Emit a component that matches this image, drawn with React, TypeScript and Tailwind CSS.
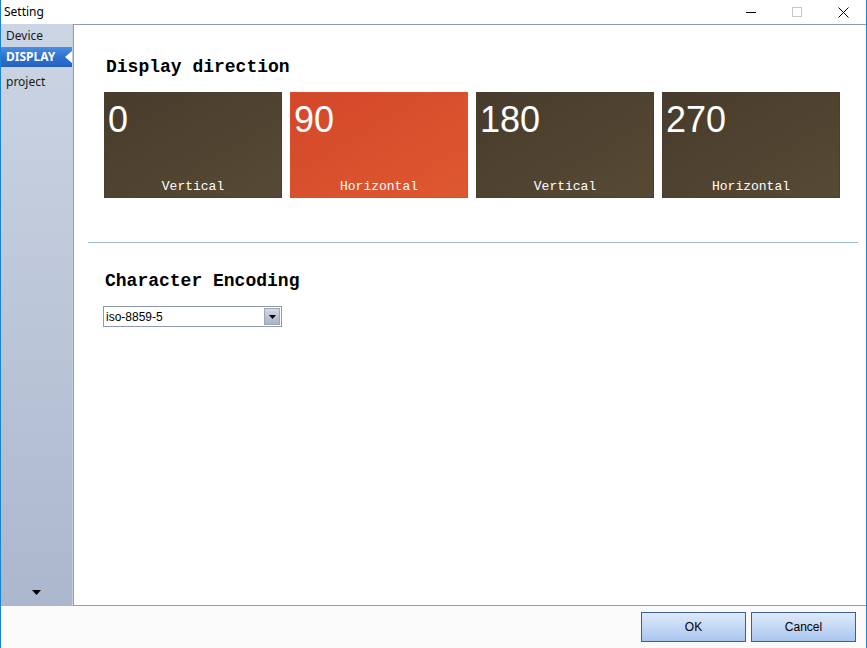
import React from 'react';

const tiles = [
  { deg: '0', label: 'Vertical', active: false },
  { deg: '90', label: 'Horizontal', active: true },
  { deg: '180', label: 'Vertical', active: false },
  { deg: '270', label: 'Horizontal', active: false },
];

const sans = "font-['Segoe_UI','Noto_Sans','Liberation_Sans',sans-serif]";
const mono = "font-['Liberation_Mono','DejaVu_Sans_Mono',monospace]";

export default function App() {
  return (
    <div className={`w-[867px] h-[648px] flex flex-col bg-white border-l border-r border-[#1883d7] ${sans} text-black overflow-hidden`}>
      {/* Title bar */}
      <div className="h-[24px] flex items-center justify-between shrink-0">
        <span className="pl-[3px] text-[12px] leading-none">Setting</span>
        <div className="flex items-center h-full">
          <div className="w-[46px] h-full flex items-center justify-center">
            <div className="w-[10px] h-px bg-black" />
          </div>
          <div className="w-[46px] h-full flex items-center justify-center">
            <div className="w-[10px] h-[10px] border border-[#c8c8c8]" />
          </div>
          <div className="w-[46px] h-full flex items-center justify-center">
            <svg width="11" height="11" viewBox="0 0 11 11">
              <path d="M0.5 0.5 L10.5 10.5 M10.5 0.5 L0.5 10.5" stroke="#000" strokeWidth="1" />
            </svg>
          </div>
        </div>
      </div>

      {/* Body */}
      <div className="flex h-[582px] shrink-0">
        {/* Sidebar */}
        <div className="w-[72px] flex flex-col bg-gradient-to-b from-[#cbd5e4] to-[#abb7cd] border-r border-[#c6cfdc] relative">
          <div className="h-[23px] flex items-center pl-[5px] text-[12px] text-[#1a1a1a]">Device</div>
          <div className="h-[20px] flex items-center pl-[5px] text-[12px] font-bold text-white bg-gradient-to-b from-[#4d8ee0] via-[#2f72d0] to-[#2563c2] relative">
            DISPLAY
            <svg className="absolute right-0 top-[4px]" width="7" height="12" viewBox="0 0 7 12">
              <path d="M7 0 L0 6 L7 12 Z" fill="#ffffff" />
            </svg>
          </div>
          <div className="h-[30px] flex items-center pl-[5px] text-[12px] text-[#1a1a1a]">project</div>
          <div className="flex-1" />
          <div className="h-[22px] flex items-start justify-center pt-[6px]">
            <svg width="9" height="5" viewBox="0 0 9 5">
              <path d="M0 0 L9 0 L4.5 5 Z" fill="#000" />
            </svg>
          </div>
        </div>

        {/* Content */}
        <div className="flex-1 border-l border-t border-b border-[#8c9db2] bg-white flex flex-col">
          <div className="pl-[30px] pt-[31px]">
            <h2 className={`${mono} font-bold text-[18px] leading-[22px] pl-[2px] text-black`}>Display direction</h2>
            <div className="flex gap-[8px] mt-[14px]">
              {tiles.map((t) => (
                <div
                  key={t.deg}
                  className={`w-[178px] h-[106px] flex flex-col justify-between border ${
                    t.active
                      ? 'bg-gradient-to-br from-[#d3472a] to-[#de5830] border-[#d9522d]'
                      : 'bg-gradient-to-br from-[#473c2c] to-[#574a35] border-[#4a3f2f]'
                  }`}
                >
                  <span className="font-['Liberation_Sans',Arial,sans-serif] text-[36px] leading-none text-white pl-[3px] pt-[9px]">
                    {t.deg}
                  </span>
                  <span className={`${mono} text-[13px] leading-none text-white text-center pb-[4px]`}>{t.label}</span>
                </div>
              ))}
            </div>
          </div>

          <div className="ml-[14px] mr-[8px] mt-[44px] h-px bg-[#9fb7d4]" />

          <div className="pl-[31px] pt-[27px]">
            <h2 className={`${mono} font-bold text-[18px] leading-[22px] text-black`}>Character Encoding</h2>
            <div className="mt-[14px] -ml-[2px] w-[179px] h-[21px] border border-[#8e9aab] bg-white flex items-center justify-between">
              <span className="font-['Liberation_Sans',Arial,sans-serif] text-[12px] leading-none pl-[2px] text-black">iso-8859-5</span>
              <div className="w-[16px] h-[17px] mr-px border border-[#9aa5b6] bg-gradient-to-b from-[#d2d9e6] to-[#aab4c8] flex items-center justify-center">
                <svg width="7" height="4" viewBox="0 0 7 4">
                  <path d="M0 0 L7 0 L3.5 4 Z" fill="#000" />
                </svg>
              </div>
            </div>
          </div>
        </div>
      </div>

      {/* Footer */}
      <div className="flex-1 bg-[#fafafa] flex justify-end items-start pt-[6px] pr-[10px] gap-[5px]">
        {['OK', 'Cancel'].map((b) => (
          <button
            key={b}
            className="w-[105px] h-[30px] border border-[#3d5f97] bg-gradient-to-b from-[#dfeafa] to-[#a9c5ee] text-[12px] text-black font-['Liberation_Sans',Arial,sans-serif]"
          >
            {b}
          </button>
        ))}
      </div>
    </div>
  );
}
